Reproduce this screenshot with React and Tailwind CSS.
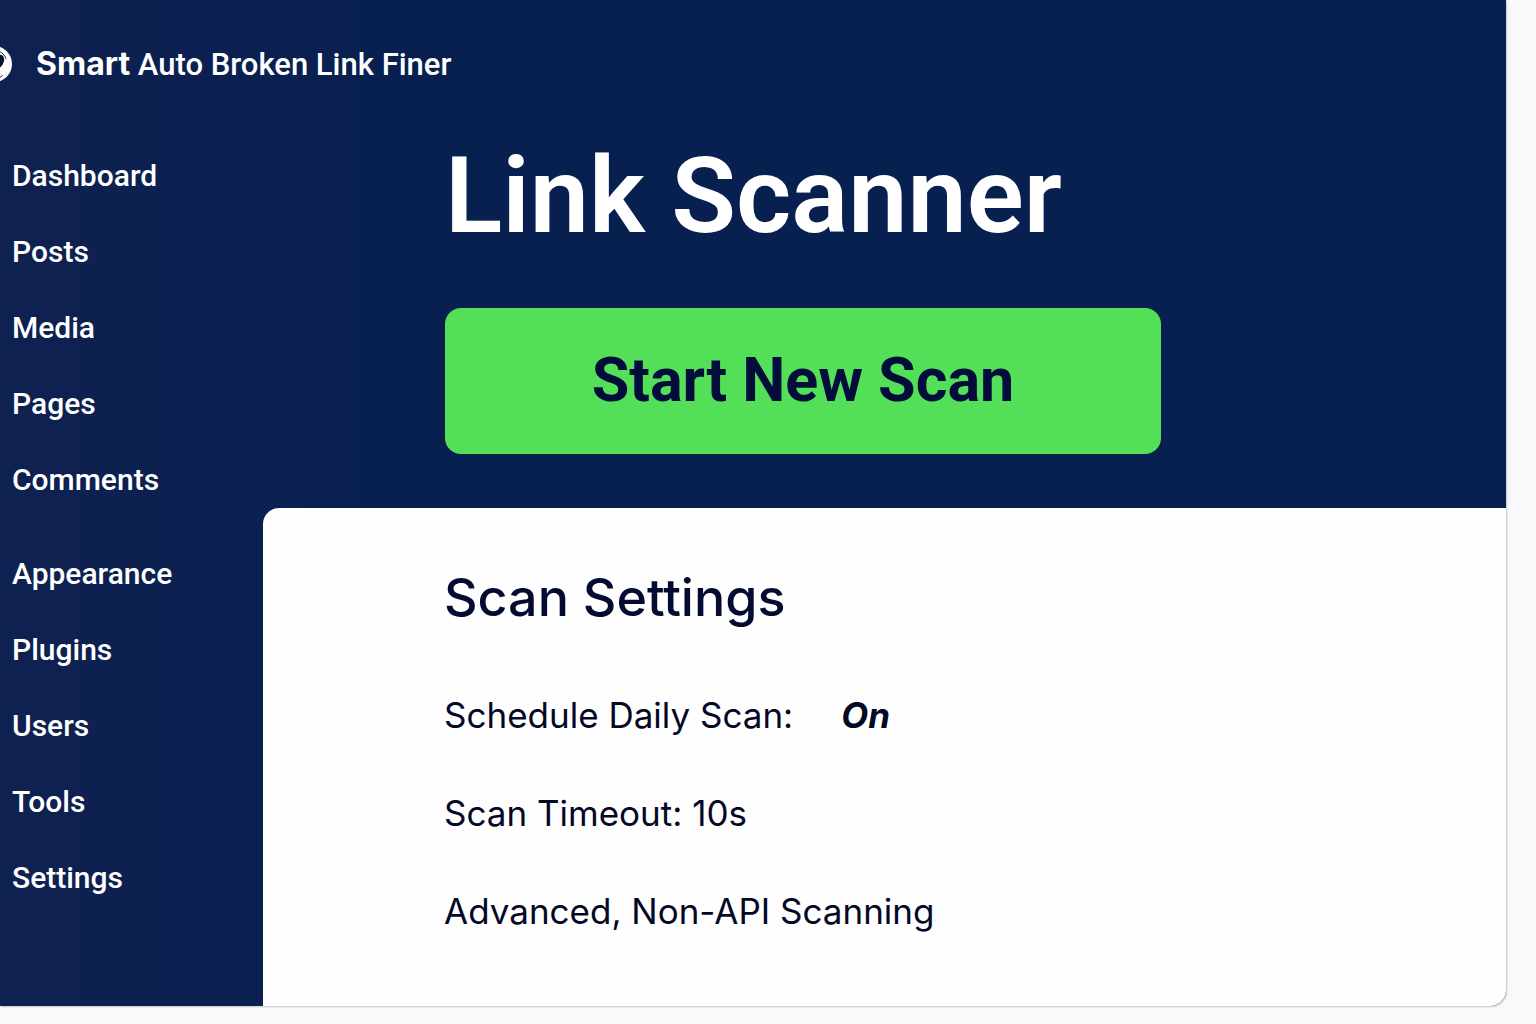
const contentMenu = ["Dashboard", "Posts", "Media", "Pages", "Comments"];
const adminMenu = ["Appearance", "Plugins", "Users", "Tools", "Settings"];

function Logo() {
  return (
    <svg className="w-9 h-9 -ml-6 shrink-0" viewBox="0 0 36 36" fill="none">
      <circle cx="18" cy="18" r="18" fill="white" />
      <path d="M21 5c5 1 8 4 9 8" stroke="#0c1c48" strokeWidth="1" />
      <path d="M21 10c4-3 8 0 7 5-1 4-3 6-7 9l-2-3c3-3 4-4 4-7 0-2-1-3-3-2z" fill="#0a1233" />
      <path d="M22 32c3-1 4-2 5-3" stroke="#0c1c48" strokeWidth="1" />
    </svg>
  );
}

function MenuGroup({ items }) {
  return (
    <ul>
      {items.map((item) => (
        <li key={item} className="h-[76px]">
          <a href="#" className="text-[30px] leading-9 font-medium hover:underline">
            {item}
          </a>
        </li>
      ))}
    </ul>
  );
}

export default function App() {
  return (
    <div className="min-h-screen bg-[#f8f9fb] pr-[30px] pb-[18px] font-['Inter',sans-serif]">
      <div className="min-h-[1006px] flex flex-col bg-[#082050] bg-linear-to-r from-[#0f2151] to-[#082050] to-25% rounded-br-2xl text-white shadow-[1px_1px_2px_#c4c7ca]">
        <header className="h-32 flex items-center gap-6 overflow-hidden font-['Roboto',sans-serif]">
          <Logo />
          <p className="text-[31px] font-medium">
            <strong className="text-[32px] font-bold font-['Inter',sans-serif]">Smart</strong> Auto Broken Link Finer
          </p>
        </header>

        <div className="flex-1 flex">
          <nav className="w-[263px] shrink-0 pl-3 pt-[30px] flex flex-col gap-[18px] font-['Roboto',sans-serif]">
            <MenuGroup items={contentMenu} />
            <MenuGroup items={adminMenu} />
          </nav>

          <main className="flex-1 flex flex-col">
            <section className="h-[380px] px-[182px]">
              <h1 className="text-[106px] leading-[136px] font-semibold font-['Roboto',sans-serif]">
                Link Scanner
              </h1>
              <button className="mt-11 w-full max-w-[716px] h-[146px] rounded-2xl bg-[#54df58] text-[61px] font-bold font-['Roboto',sans-serif] text-[#030d3c]">
                Start New Scan
              </button>
            </section>

            <section className="flex-1 px-[181px] pt-14 bg-[#fefefe] rounded-tl-2xl rounded-br-2xl text-[#030825]">
              <h2 className="text-[52px] leading-[68px] font-medium text-[#030b30]">Scan Settings</h2>
              <div className="mt-[58px] flex flex-col gap-12 text-[35px] leading-[50px]">
                <p className="flex gap-12">
                  Schedule Daily Scan: <em className="font-bold">On</em>
                </p>
                <p>Scan Timeout: 10s</p>
                <p>Advanced, Non-API Scanning</p>
              </div>
            </section>
          </main>
        </div>
      </div>
    </div>
  );
}
